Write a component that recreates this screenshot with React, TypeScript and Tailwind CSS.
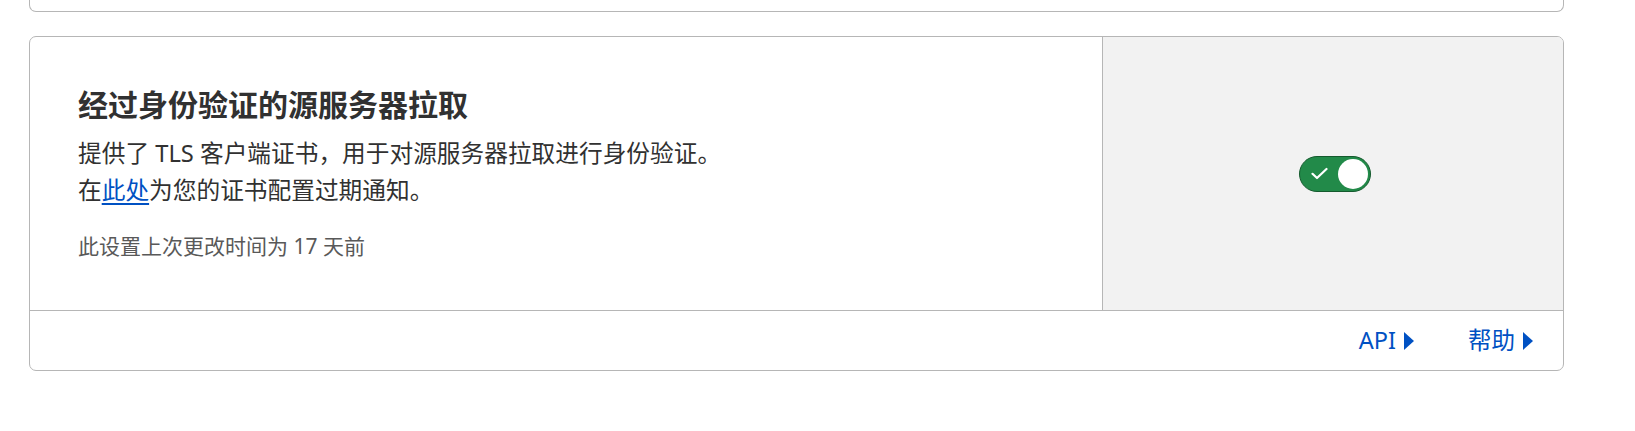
import React from "react";

const font = { fontFamily: "'Noto Sans', 'Noto Sans CJK SC', sans-serif" };

function Toggle() {
  return (
    <div className="w-[72px] h-[36px] rounded-full bg-[#228a49] border-[1.5px] border-[#155a2e] flex items-center justify-between pl-[11px] pr-[2px]">
      <svg width="17" height="13" viewBox="0 0 17 13" fill="none">
        <path d="M1.5 6.8 L6 11 L15.5 2" stroke="white" strokeWidth="2.2" strokeLinecap="round" strokeLinejoin="round" />
      </svg>
      <div className="w-[30px] h-[30px] rounded-full bg-white" />
    </div>
  );
}

function FooterLink({ label }: { label: string }) {
  return (
    <a className="flex items-center gap-[8px] text-[#0051c3] text-[23.5px] leading-none cursor-pointer">
      <span>{label}</span>
      <svg width="10" height="18" viewBox="0 0 10 18">
        <path d="M0 0 L10 9 L0 18 Z" fill="#0051c3" />
      </svg>
    </a>
  );
}

export default function App() {
  return (
    <div className="w-[1635px] h-[431px] bg-white" style={font}>
      <div className="ml-[29px] w-[1535px] h-[12px] border-x border-b border-[#b6b6b6] rounded-b-[7px]" />
      <section className="ml-[29px] mt-6 w-[1535px] border border-[#b6b6b6] rounded-[7px] overflow-hidden">
        <div className="grid grid-cols-[70%_30%] border-b border-[#b6b6b6]">
          <div className="p-12 border-r border-[#b6b6b6]">
            <h2 className="text-[30px] leading-[39px] font-bold text-[#313131]">经过身份验证的源服务器拉取</h2>
            <p className="mt-[11px] text-[23.7px] leading-[37px] text-[#313131]">
              提供了 TLS 客户端证书，用于对源服务器拉取进行身份验证。
              <br />
              在<a className="text-[#0051c3] underline underline-offset-4 cursor-pointer">此处</a>为您的证书配置过期通知。
            </p>
            <p className="mt-[22px] text-[21px] leading-[31px] text-[#595959]">此设置上次更改时间为 17 天前</p>
          </div>
          <div className="bg-[#f2f2f2] flex items-center justify-center pl-1">
            <Toggle />
          </div>
        </div>
        <div className="h-[59px] flex items-center justify-end gap-[54px] pr-[30px]">
          <FooterLink label="API" />
          <FooterLink label="帮助" />
        </div>
      </section>
    </div>
  );
}
